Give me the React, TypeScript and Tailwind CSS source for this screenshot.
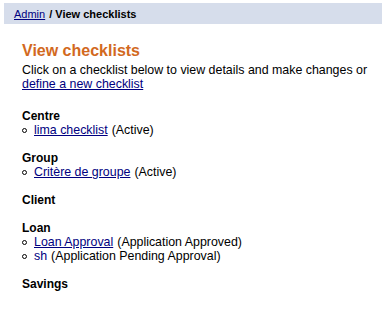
import React from "react";

type Item = { name: string; status: string; link?: boolean };
type Group = { title: string; items: Item[] };

const groups: Group[] = [
  { title: "Centre", items: [{ name: "lima checklist", status: "Active", link: true }] },
  { title: "Group", items: [{ name: "Critère de groupe", status: "Active", link: true }] },
  { title: "Client", items: [] },
  {
    title: "Loan",
    items: [
      { name: "Loan Approval", status: "Application Approved", link: true },
      { name: "sh", status: "Application Pending Approval", link: false },
    ],
  },
  { title: "Savings", items: [] },
];

export default function App() {
  return (
    <div className="h-[316px] w-[383px] bg-white pt-[3px] text-[12.4px] leading-[14px] text-black [font-family:'Liberation_Sans',Arial,sans-serif]">
      <div className="ml-[4px] mr-[1px] flex h-[21px] items-center bg-[#d6ddeb] pl-[10px] text-[11px] font-bold">
        <a href="#" className="font-normal text-[#000080] underline">
          Admin
        </a>
        <span className="ml-[4px]">/ View checklists</span>
      </div>

      <div className="pl-[22px] pr-[6px] pt-[17px]">
        <h1 className="text-[16px] font-bold leading-[19px] text-[#d2691e]">View checklists</h1>
        <p className="mt-[3px]">
          Click on a checklist below to view details and make changes or{" "}
          <a href="#" className="text-[#000080] underline">
            define a new checklist
          </a>
        </p>

        <div className="mt-[18px] flex flex-col gap-[14px]">
          {groups.map((g) => (
            <div key={g.title}>
              <div className="text-[12px] font-bold leading-[14px]">{g.title}</div>
              {g.items.length > 0 && (
                <ul>
                  {g.items.map((it) => (
                    <li key={it.name} className="flex items-center">
                      <span className="mr-[7px] inline-block h-[5px] w-[5px] rounded-full border border-black" />
                      {it.link ? (
                        <a href="#" className="text-[#000080] underline">
                          {it.name}
                        </a>
                      ) : (
                        <span className="text-[#000080]">{it.name}</span>
                      )}
                      <span className="ml-[4px]">({it.status})</span>
                    </li>
                  ))}
                </ul>
              )}
            </div>
          ))}
        </div>
      </div>
    </div>
  );
}
